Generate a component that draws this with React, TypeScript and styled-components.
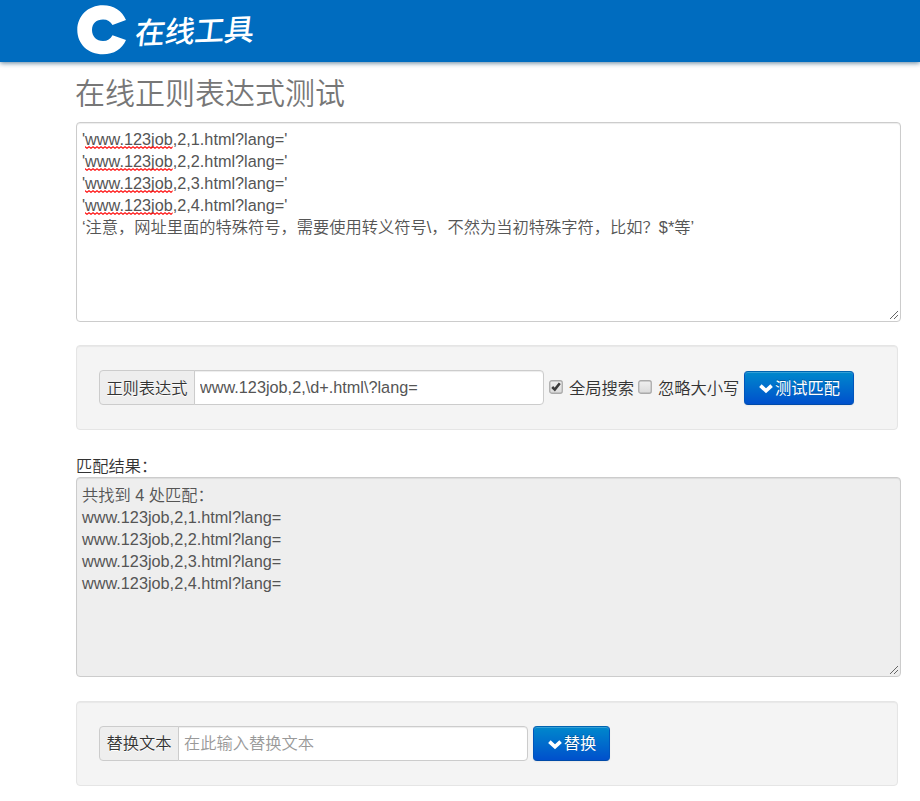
import React from "react";
import styled, { createGlobalStyle, css } from "styled-components";

const GlobalStyle = createGlobalStyle`
  *, *::before, *::after { box-sizing: border-box; }
  body {
    margin: 0;
    background: #fff;
    color: #333;
    font-family: "Liberation Sans", "Noto Sans CJK SC", sans-serif;
    font-size: 16.25px;
    font-weight: 350;
    line-height: 22px;
    overflow: hidden;
  }
`;

const Page = styled.div`
  height: 801px;
  overflow: hidden;
`;

const Header = styled.header`
  display: flex;
  align-items: flex-start;
  height: 62px;
  padding-left: 77px;
  background: #006cbf;
  box-shadow: 0 1px 5px rgba(0, 55, 95, 0.65);
`;

const LogoMark = styled.svg`
  flex: none;
  width: 50px;
  height: 50px;
  margin-top: 5px;
`;

const LogoText = styled.span`
  margin: 9px 0 0 9px;
  color: #fff;
  font-family: "Noto Sans CJK SC", sans-serif;
  font-size: 30px;
  font-weight: 500;
  line-height: 40px;
  white-space: nowrap;
  transform: skewX(-9deg) rotate(-2deg);
  letter-spacing: -0.5px;
`;

const Main = styled.main`
  width: 825px;
  margin-left: 76px;
`;

const Title = styled.h1`
  margin: 0 0 0 -1px;
  height: 60px;
  padding-top: 12px;
  color: #777;
  font-size: 30px;
  font-weight: 350;
  line-height: 40px;
`;

const TextBox = styled.div<{ $readOnly?: boolean }>`
  position: relative;
  height: 200px;
  padding: ${(p) => (p.$readOnly ? 6 : 5)}px 5px 5px;
  border: 1px solid #ccc;
  border-radius: 4px;
  background: ${(p) => (p.$readOnly ? "#eee" : "#fff")};
  box-shadow: inset 0 1px 1px rgba(0, 0, 0, 0.075);
  color: #555;
`;

const Line = styled.div`
  height: 22px;
  white-space: pre;
`;

const Misspelled = styled.span`
  position: relative;
  display: inline-block;
`;

const Wave = styled.svg`
  position: absolute;
  left: 0;
  bottom: 1px;
  width: 100%;
  height: 3px;
`;

const Grip = styled.svg`
  position: absolute;
  right: 1px;
  bottom: 1px;
  width: 10px;
  height: 10px;
`;

const Well = styled.section<{ $top: number }>`
  display: flex;
  align-items: flex-start;
  width: 822px;
  height: 85px;
  margin-top: ${(p) => p.$top}px;
  padding: 24px 22px;
  border: 1px solid #e5e5e5;
  border-radius: 4px;
  background: #f4f4f4;
  box-shadow: inset 0 1px 1px rgba(0, 0, 0, 0.05);
`;

const fieldPart = css`
  height: 35px;
  border: 1px solid #ccc;
  font: inherit;
  line-height: 33px;
`;

const AddOn = styled.label<{ $width: number; $drop?: number }>`
  ${fieldPart}
  flex: none;
  width: ${(p) => p.$width}px;
  padding-top: ${(p) => p.$drop ?? 0}px;
  border-radius: 4px 0 0 4px;
  background: #eee;
  text-align: center;
  text-shadow: 0 1px 0 #fff;
  white-space: nowrap;
`;

const Field = styled.input`
  ${fieldPart}
  flex: none;
  width: 350px;
  margin-left: -1px;
  padding: 0 5px;
  border-radius: 0 4px 4px 0;
  background: #fff;
  box-shadow: inset 0 1px 1px rgba(0, 0, 0, 0.075);
  color: #555;
  outline: none;
  &::placeholder { color: #999; opacity: 1; }
`;

const Option = styled.label`
  display: flex;
  align-items: center;
  flex: none;
  height: 35px;
  margin-left: 5px;
  white-space: nowrap;
`;

const CheckBox = styled.svg`
  width: 14px;
  height: 14px;
  margin: -2px 6px 0 0;
`;

const OptionText = styled.span<{ $width: number }>`
  width: ${(p) => p.$width}px;
`;

const Button = styled.button<{ $width: number; $offset?: number }>`
  display: flex;
  align-items: center;
  justify-content: center;
  flex: none;
  width: ${(p) => p.$width}px;
  height: ${(p) => 35 - (p.$offset ?? 0)}px;
  margin: ${(p) => p.$offset ?? 0}px 0 0 5px;
  padding: 0 0 1px;
  border: 1px solid;
  border-color: #0064b0 #0055bb #004aa8;
  border-radius: 4px;
  background: linear-gradient(#0088cc, #0050cc);
  box-shadow: inset 0 1px 0 rgba(255, 255, 255, 0.2), 0 1px 2px rgba(0, 0, 0, 0.05);
  color: #fff;
  font: inherit;
  font-weight: 400;
  text-shadow: 0 -1px 0 rgba(0, 0, 0, 0.25);
  white-space: nowrap;
`;

const Chevron = styled.svg`
  width: 16px;
  height: 11px;
  margin: 2px 1px 0 0;
`;

const ResultLabel = styled.div`
  height: 47px;
  padding-top: 25px;
`;

const ResizeGrip = () => (
  <Grip viewBox="0 0 10 10" shapeRendering="crispEdges">
    {[0, 1, 2, 3, 4, 5, 6, 7].map((n) => (
      <rect key={n} x={1 + n} y={8 - n} width="1" height="1" fill="#666" />
    ))}
    {[0, 1, 2, 3].map((n) => (
      <rect key={n} x={5 + n} y={8 - n} width="1" height="1" fill="#666" />
    ))}
  </Grip>
);

const SpellWave = ({ id }: { id: string }) => (
  <Wave>
    <defs>
      <pattern id={id} width="4" height="3" patternUnits="userSpaceOnUse">
        <path d="M-1 1.6L0 0.8L2 2.3L4 0.8L5 1.6" fill="none" stroke="#f11" strokeWidth="1.2" />
      </pattern>
    </defs>
    <rect width="100%" height="3" fill={`url(#${id})`} />
  </Wave>
);

const Check = ({ checked = false, id }: { checked?: boolean; id: string }) => (
  <CheckBox viewBox="0 0 14 14">
    <defs>
      <linearGradient id={id} x2="0" y2="1">
        <stop stopColor="#f0f0f0" />
        <stop offset="1" stopColor="#dadada" />
      </linearGradient>
    </defs>
    <rect x="0.75" y="0.75" width="12.5" height="12.5" rx="2" fill={`url(#${id})`} stroke="#aaa" strokeWidth="1.3" />
    {checked && <path d="M3.2 7L5.8 9.6L10.8 3.3" fill="none" stroke="#3c3c3c" strokeWidth="2.6" />}
  </CheckBox>
);

const DownIcon = () => (
  <Chevron viewBox="0 0 16 11">
    <path d="M2.4 2.6L8 7.8L13.6 2.6" fill="none" stroke="#fff" strokeWidth="3.7" />
  </Chevron>
);

const numbers = [1, 2, 3, 4];

export default function App() {
  return (
    <Page>
      <GlobalStyle />
      <Header>
        <LogoMark viewBox="0 0 50 50">
          <path
            fill="#fff"
            d="M49 15C45 6 37 0.3 26 0.3C11 0.3 0.3 11 0.3 25S11 49.3 26 49.3C37 49.3 45 44 49 35L35.5 30.2C33.5 34 30.5 36 26 36C19.5 36 15 31.5 15 25S19.5 14.5 26 14.5C30.5 14.5 33.5 16.5 35.5 20Z"
          />
        </LogoMark>
        <LogoText>在线工具</LogoText>
      </Header>
      <Main>
        <Title>在线正则表达式测试</Title>
        <TextBox>
          {numbers.map((n) => (
            <Line key={n}>
              '<Misspelled>www.123job<SpellWave id={`wave-${n}`} /></Misspelled>,2,{n}.html?lang='
            </Line>
          ))}
          <Line>‘注意，网址里面的特殊符号，需要使用转义符号\，不然为当初特殊字符，比如？$*等’</Line>
          <ResizeGrip />
        </TextBox>
        <Well $top={23}>
          <AddOn $width={96} $drop={1}>正则表达式</AddOn>
          <Field defaultValue="www.123job,2,\d+.html\?lang=" />
          <Option>
            <Check checked id="check-global" />
            <OptionText $width={64}>全局搜索</OptionText>
          </Option>
          <Option>
            <Check id="check-case" />
            <OptionText $width={81}>忽略大小写</OptionText>
          </Option>
          <Button $width={110} $offset={1}><DownIcon />测试匹配</Button>
        </Well>
        <ResultLabel>匹配结果：</ResultLabel>
        <TextBox $readOnly>
          <Line>共找到 4 处匹配：</Line>
          {numbers.map((n) => (
            <Line key={n}>www.123job,2,{n}.html?lang=</Line>
          ))}
          <ResizeGrip />
        </TextBox>
        <Well $top={24}>
          <AddOn $width={80}>替换文本</AddOn>
          <Field placeholder="在此输入替换文本" />
          <Button $width={77}><DownIcon />替换</Button>
        </Well>
      </Main>
    </Page>
  );
}
